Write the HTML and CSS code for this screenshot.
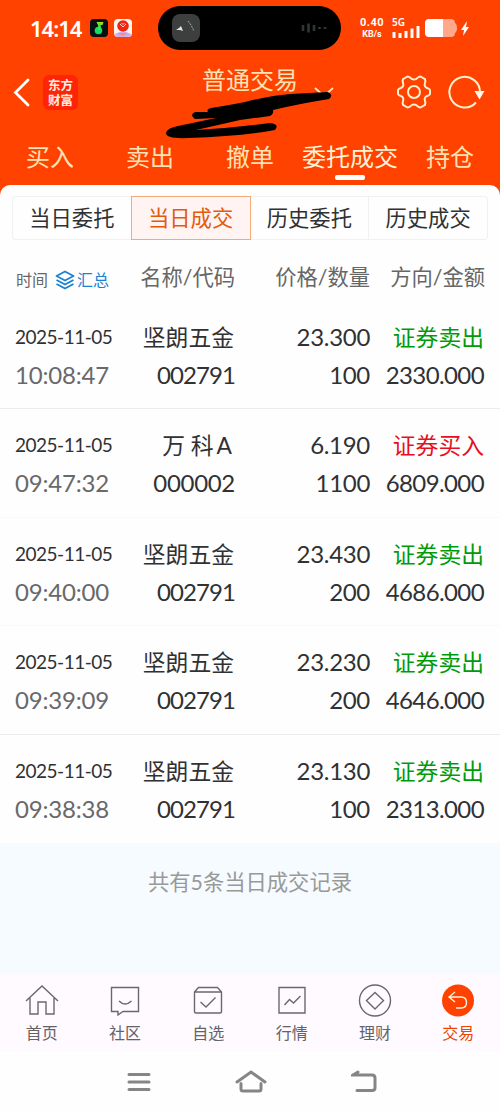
FILE: index.html
```
<!DOCTYPE html>
<html lang="zh-CN">
<head>
    <meta charset="UTF-8">
    <meta name="viewport" content="width=device-width, initial-scale=1.0">
    <title>普通交易 - 委托成交</title>
    <link rel="stylesheet" href="styles.css">
</head>
<body>
    <div class="header">
        <div class="status-bar">
            <span class="clock">14:14</span>
            <svg class="app-icon" width="18" height="18" viewBox="0 0 18 18">
                <rect width="18" height="18" rx="4" fill="#071014"/>
                <path d="M6.500 3h7l-1 3H9v2" fill="#9be51c"/>
                <circle cx="8.500" cy="11.500" r="3.800" fill="#12dc62"/>
                <path d="M9.500 4v7" stroke="#42e64b" stroke-width="2.500"/>
            </svg>
            <svg class="app-icon" width="18" height="18" viewBox="0 0 18 18">
                <rect width="18" height="18" rx="4" fill="#fff5f0"/>
                <path d="M1 15q7-4 14-1l3 2q-1 2-4 2H4q-3 0-3-3" fill="#c9b0f0"/>
                <path d="M3 14h11l-5 3z" fill="#ff8b86"/>
                <circle cx="9" cy="7" r="5.800" fill="#ee2415"/>
                <path d="M6 5l3 3 3-3M7.500 4l1.500 1.500L10.500 4" stroke="#ffd0b8" fill="none"/>
            </svg>
            <div class="island">
                <svg width="28" height="28" viewBox="0 0 28 28">
                    <rect width="28" height="28" rx="8" fill="#3c3f3d"/>
                    <path d="M16 7l3 4 3 6" fill="none" stroke="#a8aaa8" stroke-dasharray="2 1"/>
                    <path d="M4 16l3-2 2-2 2 5-3-1z" fill="#e4e4e4"/>
                </svg>
                <svg width="26" height="12" viewBox="0 0 26 12">
                    <path d="M2 3v6M7.500 1.500v9M13 3v6M18.500 5v2M24 5v2" stroke="#303638" stroke-width="2.600"/>
                </svg>
            </div>
            <div class="speed"><span>0.40</span><small>KB/s</small></div>
            <div class="signal">
                <span>5G</span>
                <svg width="28" height="13" viewBox="0 0 28 13">
                    <path d="M2 7v6M8 8v5M14 6v7M20 3.500v9.500M26 1v12" stroke="#fff" stroke-width="3"/>
                </svg>
            </div>
            <svg class="battery" width="46" height="20" viewBox="0 0 46 20">
                <path d="M18 1h9q4 0 4 4 2 1 2 5t-2 5q0 4-4 4h-9z" fill="#ffa88a"/>
                <path d="M5 1h14v18H5q-4 0-4-4V5q0-4 4-4z" fill="#fff"/>
                <path d="M43 3l-6 9h3l-1 6 6-9h-3z" fill="#fff"/>
            </svg>
        </div>

        <div class="title-bar">
            <svg class="back" width="18" height="30" viewBox="0 0 18 30"><path d="M16 3L3.500 15.500 16 28" fill="none" stroke="#fff" stroke-width="2.800" stroke-linecap="round"/></svg>
            <div class="logo">
                <div>东方</div>
                <div>财富</div>
            </div>
            <div class="title">普通交易</div>
            <svg class="arrow" width="20" height="12" viewBox="0 0 20 12"><path d="M1 1l9 8 9-8" fill="none" stroke="#ffe6c0" stroke-width="1.700"/></svg>
            <svg class="gear" width="36" height="36" viewBox="0 0 36 36" fill="none" stroke="#fff0cf" stroke-width="2">
                <path d="M11.500 2.500C15 2.500 14 5.500 18 5.500S21 2.500 24.500 2.500L29 5.200C30.500 8.500 27.500 9.500 29 12.300S33 13.500 34 16V20C33 22.500 30.500 21 29 23.700S30.500 27.500 29 30.800L24.500 33.500C21 33.500 22 30.500 18 30.500S15 33.500 11.500 33.500L7 30.800C5.500 27.500 8.500 26.500 7 23.700S3 22.500 2 20V16C3 13.500 5.500 15 7 12.300S5.500 8.500 7 5.200Z" stroke-linejoin="round"/>
                <circle cx="18" cy="18" r="6"/>
            </svg>
            <svg class="refresh" width="38" height="36" viewBox="0 0 38 36">
                <path d="M29 28.500A15.300 15.300 0 1 1 33 18" fill="none" stroke="#fff0cf" stroke-width="2"/>
                <path d="M27.500 17h10l-5 8.500z" fill="#fff7e8"/>
            </svg>
        </div>

        <div class="navbar">
            <a>买入</a>
            <a>卖出</a>
            <a>撤单</a>
            <a class="active">委托成交</a>
            <a>持仓</a>
        </div>

        <svg class="scribble" width="180" height="54" viewBox="0 0 180 54">
            <path d="M53 22Q72 19 87 16Q108 10 132 8L170 6Q176 9 171 13Q140 18 115 24Q116 28 112 30L82 34Q60 39 38 44Q75 42 112 37Q122 38 117 44Q85 50 30 52Q8 53 8 47Q9 42 20 40L58 32L37 33Q31 29 37 26L50 26Q48 23 53 22Z"/>
        </svg>
    </div>

    <div class="panel">
        <div class="tabs">
            <a>当日委托</a>
            <a class="active">当日成交</a>
            <a>历史委托</a>
            <a>历史成交</a>
        </div>

        <div class="table-head">
            <div class="time-head">
                时间
                <svg width="20" height="20" viewBox="0 0 20 20" fill="none" stroke="#1a82d2" stroke-width="1.800" stroke-linejoin="round"><path d="M1.500 6L10 1.500 18.500 6 10 10.500zM1.500 10L10 14.500 18.500 10M1.500 14L10 18.500 18.500 14"/></svg>
                <span>汇总</span>
            </div>
            <div>名称/代码</div>
            <div>价格/数量</div>
            <div>方向/金额</div>
        </div>

        <div class="record">
            <div class="date">2025-11-05</div>
            <div class="name">坚朗五金</div>
            <div class="num">23.300</div>
            <div class="name sell">证券卖出</div>
            <div class="time">10:08:47</div>
            <div class="num code">002791</div>
            <div class="num">100</div>
            <div class="num amount">2330.000</div>
        </div>
        <div class="record faint">
            <div class="date">2025-11-05</div>
            <div class="name wanke">万 科<span>A</span></div>
            <div class="num">6.190</div>
            <div class="name buy">证券买入</div>
            <div class="time">09:47:32</div>
            <div class="num">000002</div>
            <div class="num">1100</div>
            <div class="num amount">6809.000</div>
        </div>
        <div class="record faint">
            <div class="date">2025-11-05</div>
            <div class="name">坚朗五金</div>
            <div class="num">23.430</div>
            <div class="name sell">证券卖出</div>
            <div class="time">09:40:00</div>
            <div class="num code">002791</div>
            <div class="num">200</div>
            <div class="num amount">4686.000</div>
        </div>
        <div class="record">
            <div class="date">2025-11-05</div>
            <div class="name">坚朗五金</div>
            <div class="num">23.230</div>
            <div class="name sell">证券卖出</div>
            <div class="time">09:39:09</div>
            <div class="num code">002791</div>
            <div class="num">200</div>
            <div class="num amount">4646.000</div>
        </div>
        <div class="record">
            <div class="date">2025-11-05</div>
            <div class="name">坚朗五金</div>
            <div class="num">23.130</div>
            <div class="name sell">证券卖出</div>
            <div class="time">09:38:38</div>
            <div class="num code">002791</div>
            <div class="num">100</div>
            <div class="num amount">2313.000</div>
        </div>
    </div>

    <div class="summary">共有5条当日成交记录</div>

    <div class="bottom-nav">
        <a>
            <svg width="34" height="34" viewBox="0 0 34 34"><path d="M1 18L17 3l16 15M5 15v16h8V19h8v12h8V15"/></svg>
            首页
        </a>
        <a>
            <svg width="34" height="34" viewBox="0 0 34 34"><path d="M3.500 4.500h27v24H15l-5 3.500v-3.500H3.500zM11 18q6 6 12.500 0"/></svg>
            社区
        </a>
        <a>
            <svg width="34" height="34" viewBox="0 0 34 34"><path d="M3.500 9l4-4.500h19l4 4.500v19.500q0 1.500-1.500 1.500H5q-1.500 0-1.500-1.500zh27M9.500 19l5.500 5 9.500-9.500"/></svg>
            自选
        </a>
        <a>
            <svg width="34" height="34" viewBox="0 0 34 34"><path d="M4 4.500h26V30H4zM9.500 22l5-5.500 4 3.500 7-7"/></svg>
            行情
        </a>
        <a>
            <svg width="34" height="34" viewBox="0 0 34 34"><circle cx="17" cy="17.500" r="15.500"/><path d="M17 9.500l8.500 8-8.500 8.500-8.500-8.500z"/></svg>
            理财
        </a>
        <a class="active">
            <svg width="34" height="34" viewBox="0 0 34 34"><circle class="disc" cx="17" cy="17.500" r="16"/><path d="M14 9l-6 5 6 5M8 14h12q5.500 0 5.500 5.500T20 25h-5"/></svg>
            交易
        </a>
    </div>

    <div class="system-nav">
        <svg width="24" height="20" viewBox="0 0 24 20"><path d="M2 2.500h20M2 10h20M2 17.500h20"/></svg>
        <svg width="32" height="24" viewBox="0 0 32 24"><path d="M2 12L16 2l14 10M6 13.500V19q0 2 2 2h16q2 0 2-2v-5.500"/></svg>
        <svg width="26" height="24" viewBox="0 0 26 24"><path d="M7 2L2 5h19q3 0 3 3v10q0 2.500-3 2.500H6"/></svg>
    </div>
</body>
</html>
```
FILE: styles.css
```
* {
    box-sizing: border-box;
}

body {
    font-family: 'Lato', 'Noto Sans CJK SC', sans-serif;
    margin: 0;
    padding: 0;
    background: #fefefe;
    color: #303133;
}

svg {
    display: block;
    flex-shrink: 0;
}

.header {
    position: relative;
    height: 195px;
    background: #ff4200;
    color: #ffe3b5;
}

.status-bar {
    display: flex;
    align-items: center;
    height: 55px;
    padding-left: 30px;
    color: white;
}

.clock {
    width: 52px;
    font: 600 22px/28px 'Noto Sans', sans-serif;
    letter-spacing: -1px;
    margin-right: 8px;
}

.app-icon {
    margin-right: 6px;
}

.island {
    display: flex;
    align-items: center;
    justify-content: space-between;
    width: 183px;
    height: 44px;
    margin-left: 20px;
    padding: 0 14px;
    border-radius: 22px;
    background: black;
}

.speed {
    width: 28px;
    margin-left: 17px;
    font: 700 11px/12px 'Roboto', sans-serif;
    letter-spacing: 0.5px;
    text-align: center;
}

.speed span,
.speed small {
    display: block;
}

.speed small {
    font-size: 9px;
    line-height: 10px;
    letter-spacing: 0;
}

.signal {
    margin-left: 6px;
    font: 600 10px/10px 'Noto Sans', sans-serif;
}

.signal svg {
    margin-top: -2px;
}

.signal span {
    display: block;
}

.battery {
    margin-left: 4px;
}

.title-bar {
    display: flex;
    align-items: center;
    height: 74px;
    padding-left: 12px;
}

.logo {
    width: 35px;
    height: 35px;
    margin-left: 13px;
    padding-top: 2px;
    border-radius: 6px;
    background: #ff2408;
    color: #ffeedd;
    font-family: 'Noto Sans CJK SC', sans-serif;
    font-size: 12.5px;
    line-height: 15px;
    font-weight: bold;
    text-align: center;
}

.title {
    width: 98px;
    margin: -24px 14px 0 124px;
    font-size: 24px;
    line-height: 30px;
}

.arrow {
    margin-top: 2px;
}

.gear {
    margin-left: 62px;
}

.refresh {
    margin-left: 15px;
}

.navbar {
    display: flex;
    height: 56px;
}

.navbar a {
    width: 100px;
    padding-top: 10px;
    font-size: 24px;
    line-height: 36px;
    text-align: center;
    white-space: nowrap;
}

.navbar .active {
    color: #fff3d8;
}

.navbar .active::after {
    content: '';
    display: block;
    width: 30px;
    height: 5px;
    margin: 0 auto;
    border-radius: 2px;
    background: white;
}

.scribble {
    position: absolute;
    left: 158px;
    top: 86px;
}

.panel {
    position: relative;
    height: 658px;
    margin-top: -10px;
    border-radius: 10px 10px 0 0;
    background: #fefefe;
}

.tabs {
    display: flex;
    padding: 11px 12px 0;
}

.tabs a {
    flex: 1;
    height: 44px;
    border: 1px solid #f1f1f1;
    border-left-width: 0;
    font-size: 21.3px;
    line-height: 43px;
    text-align: center;
}

.tabs a:first-child {
    border-left-width: 1px;
    border-right-width: 0;
    border-radius: 4px 0 0 4px;
}

.tabs a:last-child {
    border-radius: 0 4px 4px 0;
}

.tabs .active {
    border: 1px solid #f3aa7c;
    background: #fff4f2;
    color: #e45a0a;
}

.table-head,
.record {
    display: grid;
    grid-template-columns: 105px 115px 135px 115px;
    padding: 0 15px;
    text-align: right;
}

.table-head {
    height: 61px;
    padding-top: 21px;
    color: #666;
    font-size: 21.3px;
    line-height: 32px;
}

.time-head {
    display: flex;
    align-items: center;
    height: 38px;
    padding-left: 1px;
    font-size: 16px;
}

.time-head svg {
    margin: 0 2px 0 7px;
}

.time-head span {
    color: #1a82d2;
}

.record {
    grid-template-rows: 38px 37px;
    height: 108.4px;
    padding-top: 17px;
    border-bottom: 1px solid #ececec;
    line-height: 38px;
}

.faint {
    border-bottom-color: #f9f9f9;
}

.record:last-child {
    border-bottom: none;
}

.date {
    font-size: 19px;
    letter-spacing: -0.5px;
    text-align: left;
}

.time {
    color: #68696b;
    font-size: 24px;
    letter-spacing: -0.2px;
    text-align: left;
}

.name {
    padding-right: 1px;
    font-size: 22.8px;
}

.wanke {
    padding-right: 3px;
}

.wanke span {
    margin-left: 3px;
}

.num {
    font-size: 24px;
    letter-spacing: -0.3px;
}

.code {
    letter-spacing: -0.9px;
}

.amount {
    padding-right: 1px;
    letter-spacing: -0.6px;
}

.sell {
    color: #009b0b;
}

.buy {
    color: #e60f22;
}

.summary {
    height: 131px;
    padding-top: 22px;
    background: #f6fbff;
    color: #999;
    font-size: 21.3px;
    line-height: 34px;
    text-align: center;
}

.bottom-nav {
    display: flex;
    height: 78px;
    padding-top: 9px;
    background: #fffaff;
}

.bottom-nav a {
    display: flex;
    flex: 1;
    flex-direction: column;
    align-items: center;
    color: #636366;
    font-size: 16px;
    line-height: 32px;
}

.bottom-nav svg {
    fill: none;
    stroke: #68686c;
    stroke-width: 1.4;
}

.bottom-nav .active {
    color: #e94700;
}

.bottom-nav .active svg {
    stroke: #fff5dd;
}

.bottom-nav .disc {
    fill: #ff4200;
    stroke: none;
}

.system-nav {
    display: flex;
    justify-content: center;
    align-items: center;
    gap: 84px;
    height: 60px;
    padding-left: 3px;
}

.system-nav svg {
    fill: none;
    stroke: #858585;
    stroke-width: 3;
    stroke-linecap: round;
}
```
